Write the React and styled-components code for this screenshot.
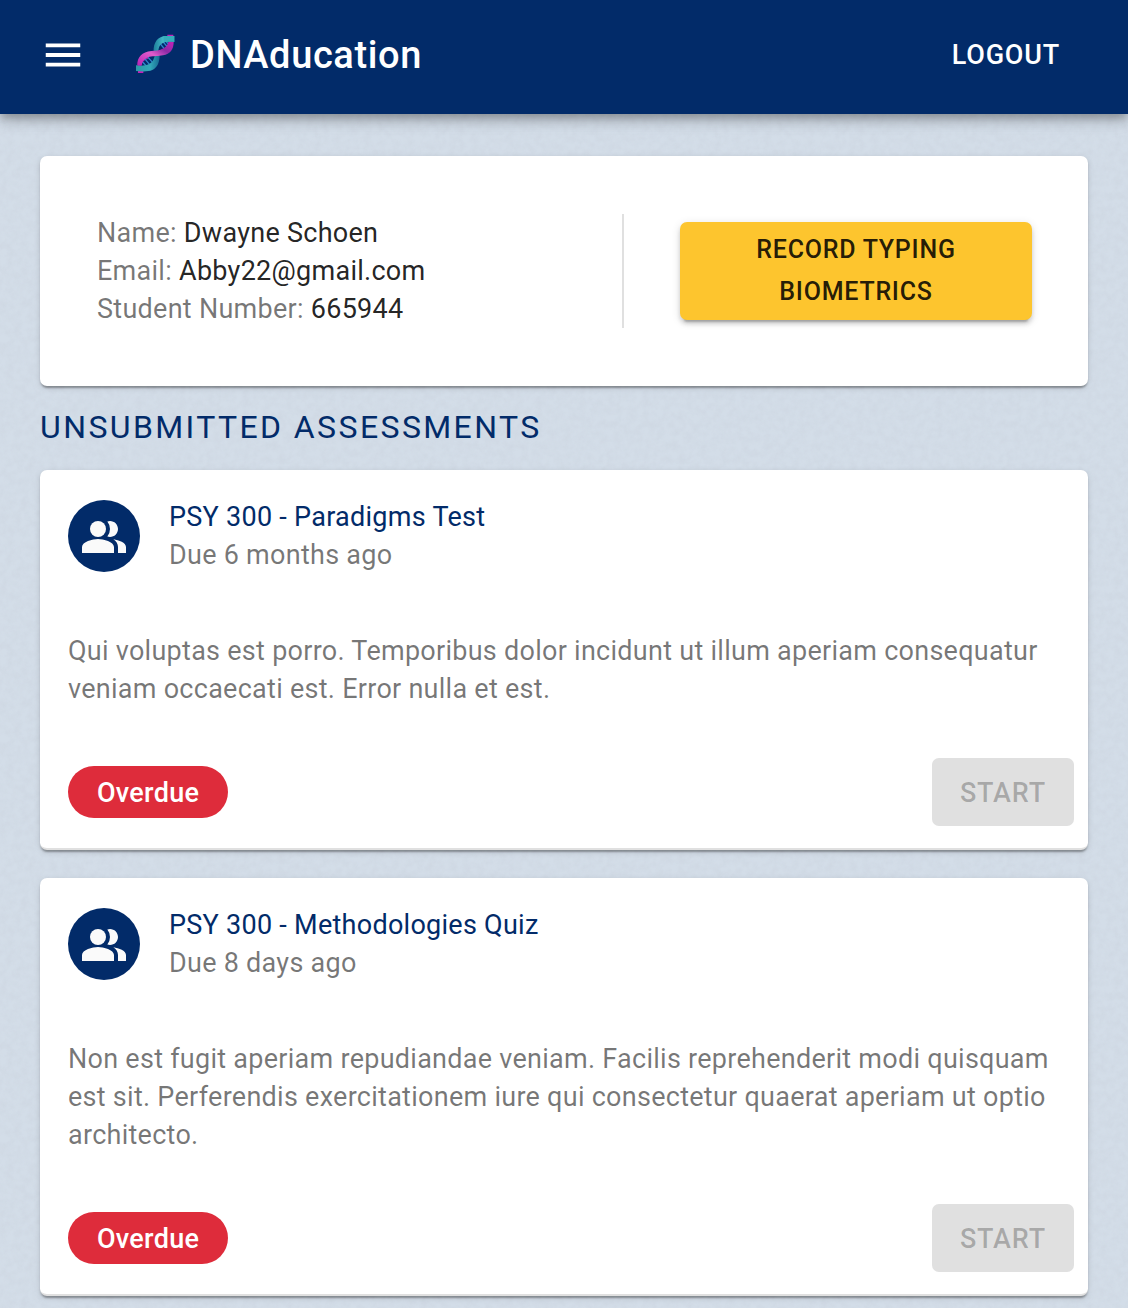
import React from 'react';
import styled, { createGlobalStyle } from 'styled-components';
import { MdMenu, MdPeopleAlt } from 'react-icons/md';

const navy = '#022b69';
const muted = 'rgba(0, 0, 0, 0.54)';
const cardShadow =
  '0 4px 2px -2px rgba(0,0,0,0.2), 0 2px 2px 0 rgba(0,0,0,0.14), 0 2px 6px 0 rgba(0,0,0,0.12)';

const paper = `url("data:image/svg+xml,%3Csvg xmlns='http://www.w3.org/2000/svg' width='400' height='400'%3E%3Cfilter id='g' x='0' y='0' width='100%25' height='100%25'%3E%3CfeTurbulence type='fractalNoise' baseFrequency='0.14' numOctaves='3' stitchTiles='stitch'/%3E%3CfeColorMatrix values='0 0 0 0 0.5 0 0 0 0 0.53 0 0 0 0 0.6 0.3 0 0 0 -0.09'/%3E%3C/filter%3E%3Crect width='400' height='400' filter='url(%23g)'/%3E%3C/svg%3E")`;

const GlobalStyle = createGlobalStyle`
  *, *::before, *::after { box-sizing: border-box; }
  body {
    margin: 0;
    min-height: 100vh;
    background: #d3dde8 ${paper};
    color: rgba(0, 0, 0, 0.87);
    font: 400 27px/38px Roboto, sans-serif;
    letter-spacing: 0.01em;
    -webkit-font-smoothing: antialiased;
  }
  button { font-family: inherit; }
  h1, h2, h3, p, dl, dt, dd { margin: 0; font: inherit; }
`;

const AppBar = styled.header`
  position: relative;
  display: flex;
  align-items: center;
  min-height: 114px;
  padding: 0 56px 4px 40px;
  background: ${navy};
  color: #fff;
  box-shadow: 0 4px 8px -2px rgba(0, 0, 0, 0.2), 0 8px 10px 0 rgba(0, 0, 0, 0.14),
    0 2px 20px 0 rgba(0, 0, 0, 0.12);
`;

const IconButton = styled.button`
  display: flex;
  padding: 0;
  border: 0;
  background: none;
  color: inherit;
  font-size: 46px;
  cursor: pointer;
`;

const Brand = styled.a`
  display: flex;
  align-items: center;
  gap: 14px;
  margin-left: 48px;
  color: inherit;
  font-size: 38px;
  font-weight: 500;
  line-height: 60px;
  letter-spacing: 0.016em;
  text-decoration: none;
`;

const TextButton = styled.button`
  margin-left: auto;
  padding: 12px;
  border: 0;
  background: none;
  color: inherit;
  font-size: 27px;
  font-weight: 500;
  line-height: 42px;
  letter-spacing: 0.03em;
  text-transform: uppercase;
  cursor: pointer;
`;

const Main = styled.main`
  padding: 42px 40px 12px;
`;

const Card = styled.section`
  border-radius: 7px;
  background: #fff;
  box-shadow: ${cardShadow};
`;

const ProfileCard = styled(Card)`
  display: flex;
  align-items: center;
  padding: 58px 56px;
`;

const Details = styled.dl`
  flex: 1;
  padding-left: 1px;
`;

const Detail = styled.div`
  display: flex;
  gap: 7px;
`;

const Term = styled.dt`
  color: ${muted};
`;

const ProfileAction = styled.div`
  display: flex;
  align-items: center;
  width: 410px;
  min-height: 114px;
  padding-left: 56px;
  border-left: 2px solid rgba(0, 0, 0, 0.12);
`;

const PrimaryButton = styled.button`
  width: 100%;
  padding: 7px 56px;
  border: 0;
  border-radius: 7px;
  background: #fdc52e;
  color: rgba(0, 0, 0, 0.87);
  font-size: 25px;
  font-weight: 500;
  line-height: 42px;
  letter-spacing: 0.03em;
  text-transform: uppercase;
  box-shadow: 0 6px 2px -4px rgba(0, 0, 0, 0.2), 0 4px 4px 0 rgba(0, 0, 0, 0.14),
    0 2px 10px 0 rgba(0, 0, 0, 0.12);
  cursor: pointer;
`;

const SectionTitle = styled.h2`
  && {
    padding-bottom: 2px;
    color: ${navy};
    font-size: 32px;
    line-height: 82px;
    letter-spacing: 0.075em;
    text-transform: uppercase;
  }
`;

const AssessmentList = styled.div`
  display: grid;
  gap: 28px;
`;

const AssessmentCard = styled(Card)`
  padding: 28px 14px 22px 28px;
  border-bottom: 2px solid #e0e0e0;
`;

const CardHeader = styled.div`
  display: flex;
  align-items: center;
  gap: 29px;
`;

const Avatar = styled.div`
  display: grid;
  place-items: center;
  width: 72px;
  height: 72px;
  padding-top: 2px;
  border-radius: 50%;
  background: ${navy};
  color: #fafafa;
  font-size: 48px;
`;

const CardTitle = styled.h3`
  color: ${navy};
`;

const Muted = styled.p`
  color: ${muted};
`;

const Description = styled(Muted)`
  && {
    margin: 58px 14px 50px 0;
  }
`;

const CardActions = styled.div`
  display: flex;
  align-items: center;
  justify-content: space-between;
`;

const Chip = styled.span`
  padding: 8px 29px 6px;
  border-radius: 26px;
  background: #de2c3b;
  color: #fff;
  font-weight: 500;
`;

const StartButton = styled.button`
  padding: 14px 28px 12px;
  border: 0;
  border-radius: 7px;
  background: #e0e0e0;
  color: rgba(0, 0, 0, 0.26);
  font-size: 27px;
  font-weight: 500;
  line-height: 42px;
  letter-spacing: 0.03em;
  text-transform: uppercase;
`;

function DnaLogo() {
  return (
    <svg width="42" height="42" viewBox="12 12 126 126" aria-hidden="true">
      <defs>
        <linearGradient id="tealTop" x1="0" y1="0" x2="1" y2="0">
          <stop offset="0" stopColor="#1d7f9b" />
          <stop offset="0.55" stopColor="#4cc6cf" />
          <stop offset="1" stopColor="#1f8fa0" />
        </linearGradient>
        <linearGradient id="tealBottom" x1="0" y1="0" x2="1" y2="0">
          <stop offset="0" stopColor="#2b9aa6" />
          <stop offset="0.6" stopColor="#32a9b9" />
          <stop offset="1" stopColor="#176a93" />
        </linearGradient>
        <linearGradient id="pinkBand" x1="0" y1="1" x2="1" y2="0">
          <stop offset="0" stopColor="#b822b4" />
          <stop offset="0.45" stopColor="#df5ccb" />
          <stop offset="0.7" stopColor="#8d2aa5" />
          <stop offset="1" stopColor="#c322b9" />
        </linearGradient>
      </defs>
      <path d="M112 14h18v8h-18zM24 118h16v11H24z" fill="#c41fb8" />
      <path
        d="M122 32c0 18-10 29-26 32M28 112c0-16 10-28 27-32"
        fill="none"
        stroke="#9b23ac"
        strokeWidth="12"
      />
      <g stroke="#2f86cf" strokeWidth="4">
        <path d="M88 38l18 22M98 34l17 20M108 34l10 12M38 96l18 20M44 86l22 26M54 82l20 22" />
      </g>
      <path d="M18 106c22 3 48 1 54-22l4-10h13c0 22-6 38-22 46-14 6-34 4-49 3z" fill="url(#tealBottom)" />
      <path d="M71 66c-2-30 14-47 36-48h26v18c-22-3-44 0-47 20l-2 10z" fill="url(#tealTop)" />
      <path
        d="M22 106c-1-24 14-40 42-43 24-2 44-4 52-27h15c0 22-10 36-32 40-28 5-58-2-64 30z"
        fill="url(#pinkBand)"
      />
      <path d="M100 18h33v18c-13-2-24-2-32 1z" fill="#35adb9" />
    </svg>
  );
}

const profile = [
  ['Name:', 'Dwayne Schoen'],
  ['Email:', 'Abby22@gmail.com'],
  ['Student Number:', '665944'],
];

const assessments = [
  {
    title: 'PSY 300 - Paradigms Test',
    due: 'Due 6 months ago',
    description:
      'Qui voluptas est porro. Temporibus dolor incidunt ut illum aperiam consequatur veniam occaecati est. Error nulla et est.',
  },
  {
    title: 'PSY 300 - Methodologies Quiz',
    due: 'Due 8 days ago',
    description:
      'Non est fugit aperiam repudiandae veniam. Facilis reprehenderit modi quisquam est sit. Perferendis exercitationem iure qui consectetur quaerat aperiam ut optio architecto.',
  },
];

export default function App() {
  return (
    <>
      <GlobalStyle />
      <AppBar>
        <IconButton type="button" aria-label="Open menu">
          <MdMenu />
        </IconButton>
        <Brand href="#">
          <DnaLogo />
          DNAducation
        </Brand>
        <TextButton type="button">Logout</TextButton>
      </AppBar>
      <Main>
        <ProfileCard>
          <Details>
            {profile.map(([term, value]) => (
              <Detail key={term}>
                <Term>{term}</Term>
                <dd>{value}</dd>
              </Detail>
            ))}
          </Details>
          <ProfileAction>
            <PrimaryButton type="button">Record typing biometrics</PrimaryButton>
          </ProfileAction>
        </ProfileCard>
        <SectionTitle>Unsubmitted assessments</SectionTitle>
        <AssessmentList>
          {assessments.map(({ title, due, description }) => (
            <AssessmentCard key={title}>
              <CardHeader>
                <Avatar>
                  <MdPeopleAlt aria-hidden="true" />
                </Avatar>
                <div>
                  <CardTitle>{title}</CardTitle>
                  <Muted>{due}</Muted>
                </div>
              </CardHeader>
              <Description>{description}</Description>
              <CardActions>
                <Chip>Overdue</Chip>
                <StartButton type="button" disabled>
                  Start
                </StartButton>
              </CardActions>
            </AssessmentCard>
          ))}
        </AssessmentList>
      </Main>
    </>
  );
}
